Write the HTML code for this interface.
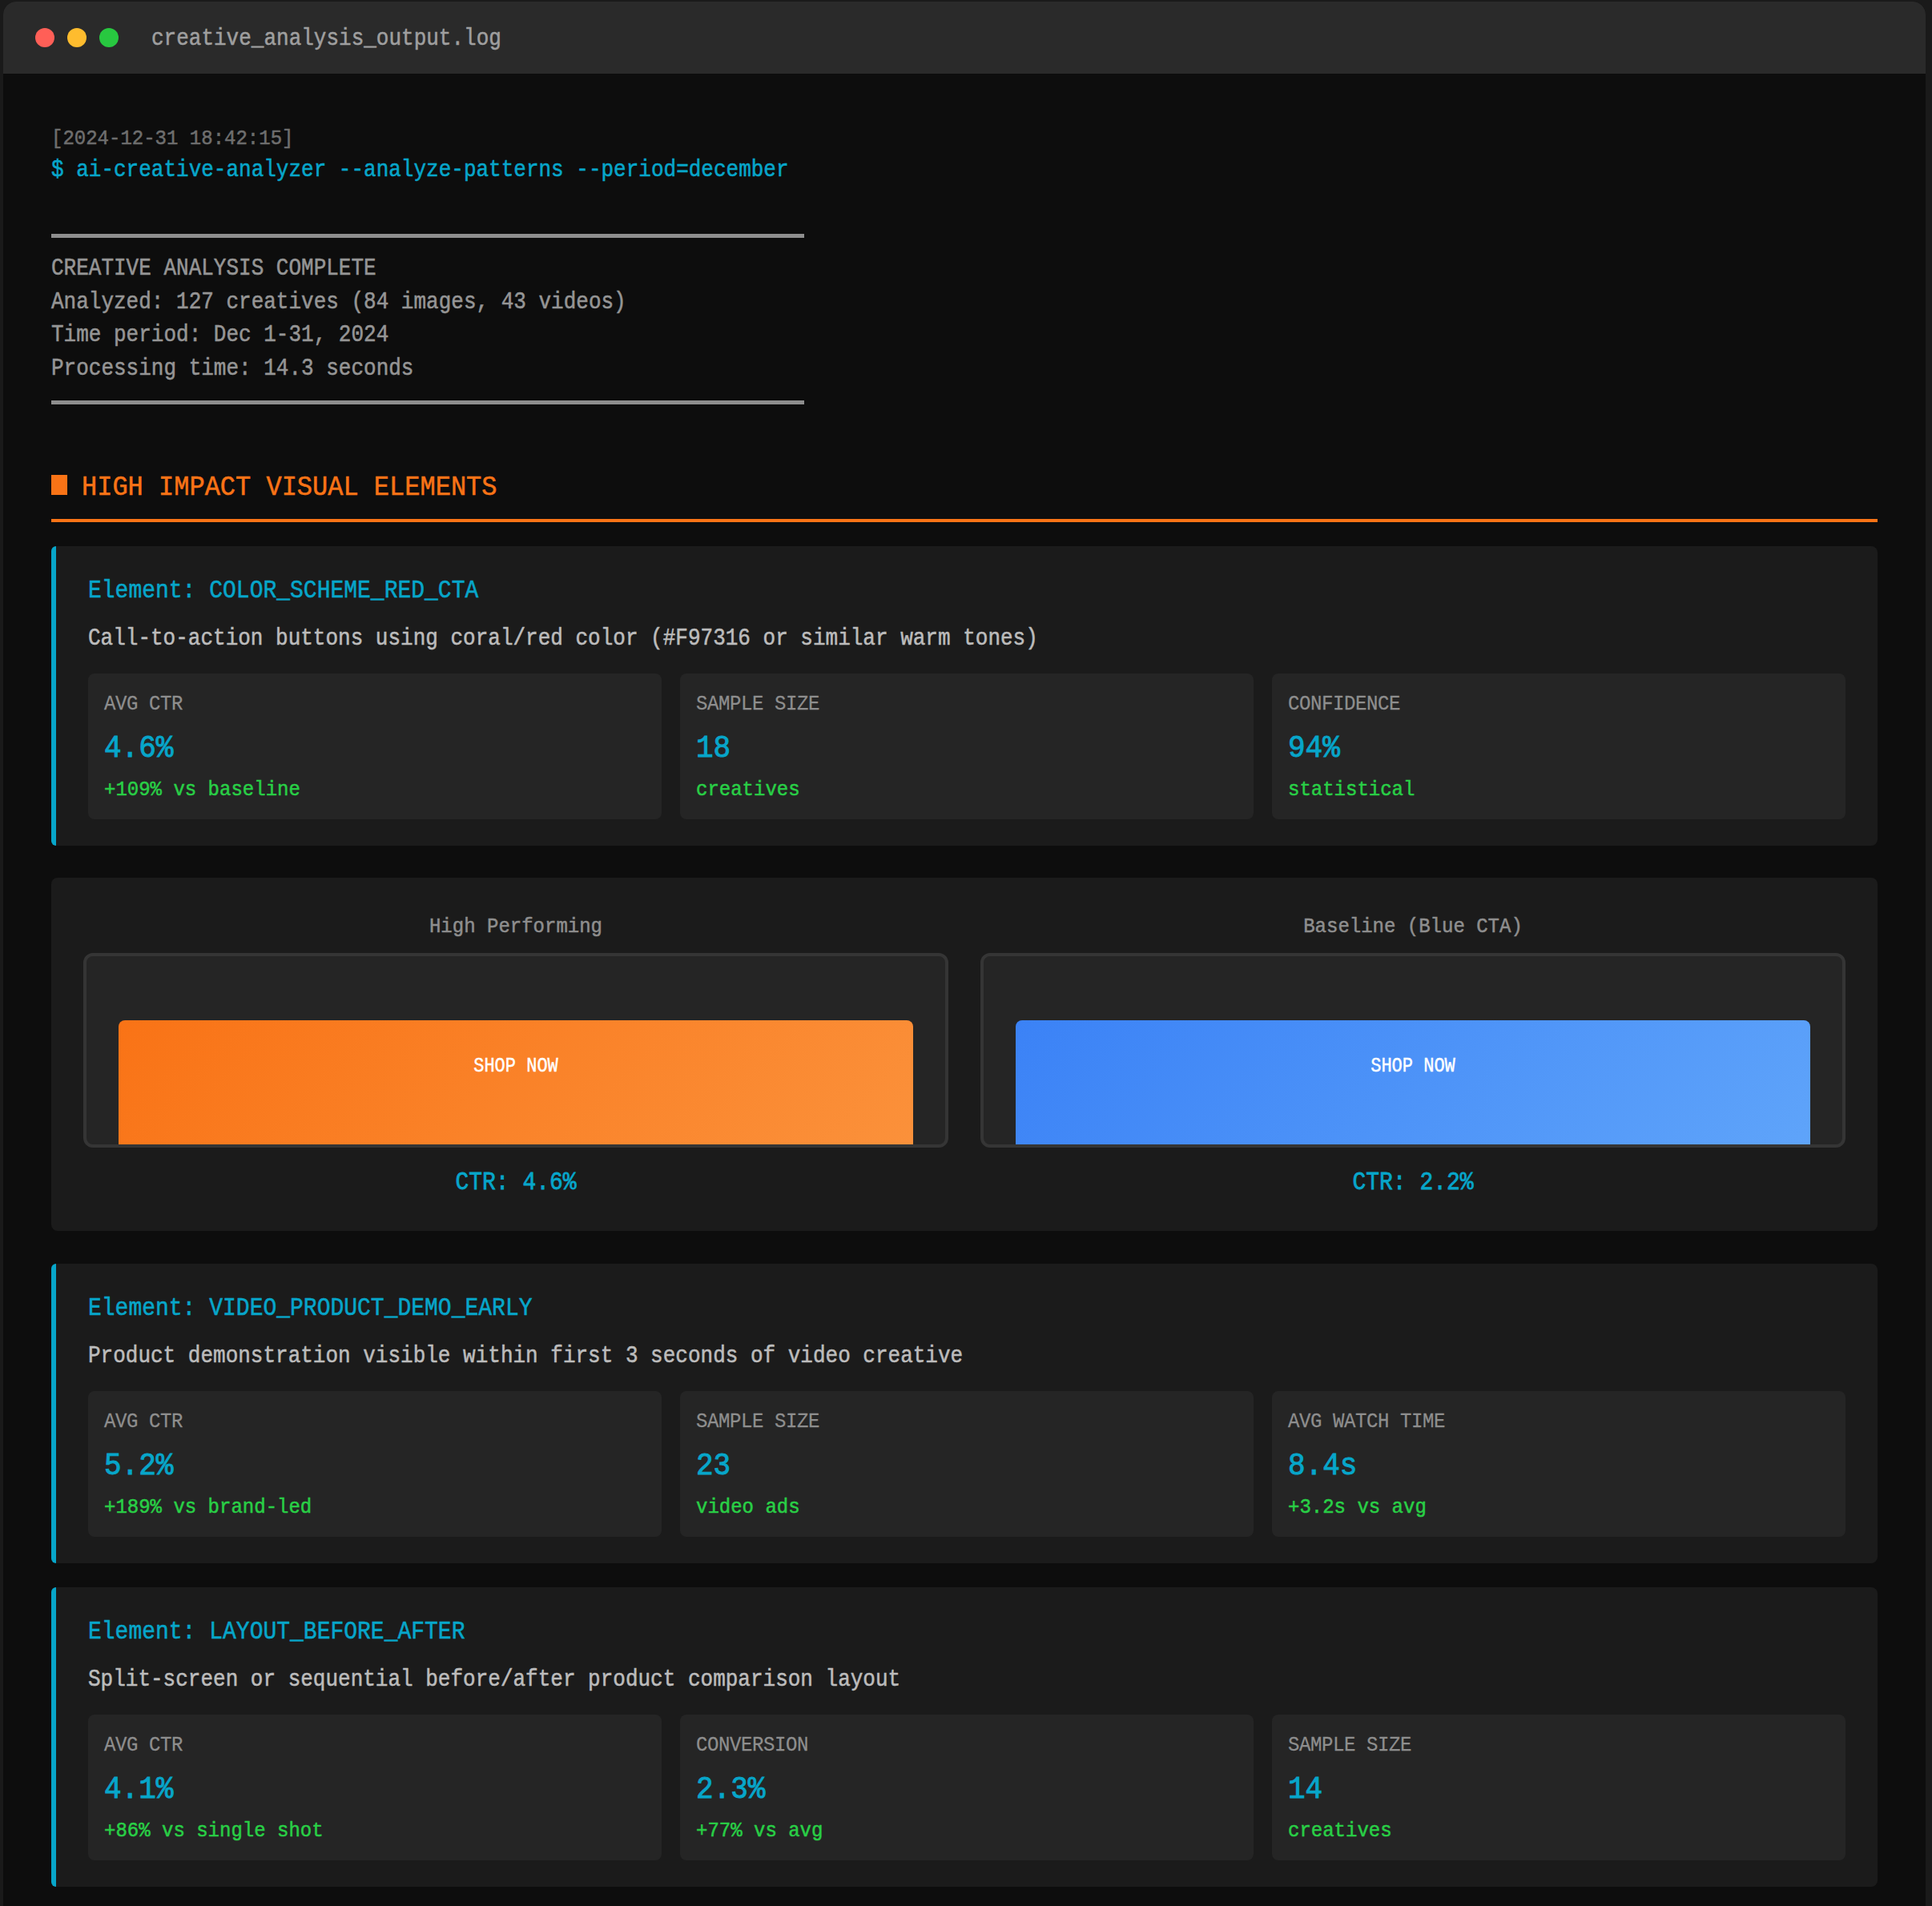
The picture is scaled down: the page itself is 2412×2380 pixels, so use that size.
<!DOCTYPE html>
<html>
<head>
<meta charset="utf-8">
<style>
html,body{margin:0;padding:0;}
body{width:2412px;height:2380px;overflow:hidden;background:#1a1a1a;position:relative;font-family:"Liberation Mono",monospace;}
.win{position:absolute;left:4px;top:2px;width:2400px;height:2500px;border-radius:16px;overflow:hidden;background:#0d0d0d;}
.bar{position:absolute;left:0;top:0;width:2400px;height:90px;background:#2a2a2a;}
.dot{position:absolute;top:33px;width:24px;height:24px;border-radius:50%;}
.t{position:absolute;white-space:pre;line-height:1;transform:scaleY(1.1);transform-origin:0 0.766em;-webkit-text-stroke:0.5px currentColor;}
.v{-webkit-text-stroke:0.9px currentColor;}
.rule{position:absolute;background:#8e8e8e;}
.card{position:absolute;left:64px;width:2280px;background:#1b1b1b;border-radius:8px;}
.card .bl{position:absolute;left:0;top:0;bottom:0;width:6px;background:#07a6ca;border-radius:8px 0 0 8px;}
.box{position:absolute;width:716px;height:182px;background:#252525;border-radius:8px;}
.cyan{color:#07a6ca;}
.green{color:#29cf46;}
.lbl{color:#8e8e8e;letter-spacing:-0.4px;-webkit-text-stroke:0.25px currentColor !important;}
.cmp{position:absolute;left:64px;width:2280px;background:#1b1b1b;border-radius:8px;}
.col{position:absolute;top:0;width:1080px;height:441px;}
.clbl{position:absolute;left:0;width:1080px;top:50px;text-align:center;font-size:24px;line-height:1;color:#8e8e8e;white-space:pre;transform:scaleY(1.1);transform-origin:50% 0.766em;-webkit-text-stroke:0.5px currentColor;}
.pv{position:absolute;left:0;top:94px;width:1072px;height:235px;border:4px solid #353535;border-radius:12px;background:#252525;overflow:hidden;}
.btn{position:absolute;left:40px;top:80px;width:992px;height:200px;border-radius:8px;}
.btn span{position:absolute;left:0;width:992px;top:48px;text-align:center;color:#fff;font-size:22px;line-height:1;white-space:pre;transform:scaleY(1.15);transform-origin:50% 0.766em;-webkit-text-stroke:0.4px currentColor;}
.orange{background:linear-gradient(135deg,#f97316,#fb923c);}
.blue{background:linear-gradient(135deg,#3b82f6,#60a5fa);}
.ctr{position:absolute;left:0;width:1080px;top:368px;text-align:center;font-size:28px;line-height:1;color:#07a6ca;white-space:pre;transform:scaleY(1.12);transform-origin:50% 0.766em;-webkit-text-stroke:0.7px currentColor;}
</style>
</head>
<body>
<div class="win">
  <div class="bar"></div>
  <div class="dot" style="left:40px;background:#ff5f57;"></div>
  <div class="dot" style="left:80px;background:#febc2e;"></div>
  <div class="dot" style="left:120px;background:#28c840;"></div>
</div>

<div class="t" style="left:189px;top:36px;font-size:26px;color:#9f9f9f;">creative_analysis_output.log</div>

<div class="t" style="left:64px;top:162px;font-size:24px;color:#6e6e6e;">[2024-12-31 18:42:15]</div>
<div class="t cyan" style="left:64px;top:200px;font-size:26px;">$ ai-creative-analyzer --analyze-patterns --period=december</div>

<div class="rule" style="left:64px;top:292px;width:940px;height:5px;"></div>
<div class="t" style="left:64px;top:323px;font-size:26px;color:#959595;">CREATIVE ANALYSIS COMPLETE</div>
<div class="t" style="left:64px;top:365px;font-size:26px;color:#959595;">Analyzed: 127 creatives (84 images, 43 videos)</div>
<div class="t" style="left:64px;top:406px;font-size:26px;color:#959595;">Time period: Dec 1-31, 2024</div>
<div class="t" style="left:64px;top:448px;font-size:26px;color:#959595;">Processing time: 14.3 seconds</div>
<div class="rule" style="left:64px;top:500px;width:940px;height:5px;"></div>

<div style="position:absolute;left:64px;top:593px;width:20px;height:25px;background:#f97316;"></div>
<div class="t" style="left:102px;top:594px;font-size:32px;color:#f97316;">HIGH IMPACT VISUAL ELEMENTS</div>
<div style="position:absolute;left:64px;top:648px;width:2280px;height:4px;background:#f97316;"></div>

<!-- CARD 1 -->
<div class="card" style="top:682px;height:374px;">
  <div class="bl"></div>
  <div class="t cyan" style="left:46px;top:43px;font-size:28px;">Element: COLOR_SCHEME_RED_CTA</div>
  <div class="t" style="left:46px;top:103px;font-size:26px;color:#bcbcbc;">Call-to-action buttons using coral/red color (#F97316 or similar warm tones)</div>
  <div class="box" style="left:46px;top:159px;">
    <div class="t lbl" style="left:20px;top:27px;font-size:24px;">AVG CTR</div>
    <div class="t cyan v" style="left:20px;top:77px;font-size:36px;">4.6%</div>
    <div class="t green" style="left:20px;top:134px;font-size:24px;">+109% vs baseline</div>
  </div>
  <div class="box" style="left:785px;top:159px;">
    <div class="t lbl" style="left:20px;top:27px;font-size:24px;">SAMPLE SIZE</div>
    <div class="t cyan v" style="left:20px;top:77px;font-size:36px;">18</div>
    <div class="t green" style="left:20px;top:134px;font-size:24px;">creatives</div>
  </div>
  <div class="box" style="left:1524px;top:159px;">
    <div class="t lbl" style="left:20px;top:27px;font-size:24px;">CONFIDENCE</div>
    <div class="t cyan v" style="left:20px;top:77px;font-size:36px;">94%</div>
    <div class="t green" style="left:20px;top:134px;font-size:24px;">statistical</div>
  </div>
</div>
<!-- COMPARISON -->
<div class="cmp" style="top:1096px;height:441px;">
  <div class="col" style="left:40px;">
    <div class="clbl">High Performing</div>
    <div class="pv"><div class="btn orange"><span>SHOP NOW</span></div></div>
    <div class="ctr">CTR: 4.6%</div>
  </div>
  <div class="col" style="left:1160px;">
    <div class="clbl">Baseline (Blue CTA)</div>
    <div class="pv"><div class="btn blue"><span>SHOP NOW</span></div></div>
    <div class="ctr">CTR: 2.2%</div>
  </div>
</div>
<!-- CARD 2 -->
<div class="card" style="top:1578px;height:374px;">
  <div class="bl"></div>
  <div class="t cyan" style="left:46px;top:43px;font-size:28px;">Element: VIDEO_PRODUCT_DEMO_EARLY</div>
  <div class="t" style="left:46px;top:103px;font-size:26px;color:#bcbcbc;">Product demonstration visible within first 3 seconds of video creative</div>
  <div class="box" style="left:46px;top:159px;">
    <div class="t lbl" style="left:20px;top:27px;font-size:24px;">AVG CTR</div>
    <div class="t cyan v" style="left:20px;top:77px;font-size:36px;">5.2%</div>
    <div class="t green" style="left:20px;top:134px;font-size:24px;">+189% vs brand-led</div>
  </div>
  <div class="box" style="left:785px;top:159px;">
    <div class="t lbl" style="left:20px;top:27px;font-size:24px;">SAMPLE SIZE</div>
    <div class="t cyan v" style="left:20px;top:77px;font-size:36px;">23</div>
    <div class="t green" style="left:20px;top:134px;font-size:24px;">video ads</div>
  </div>
  <div class="box" style="left:1524px;top:159px;">
    <div class="t lbl" style="left:20px;top:27px;font-size:24px;">AVG WATCH TIME</div>
    <div class="t cyan v" style="left:20px;top:77px;font-size:36px;">8.4s</div>
    <div class="t green" style="left:20px;top:134px;font-size:24px;">+3.2s vs avg</div>
  </div>
</div>
<!-- CARD 3 -->
<div class="card" style="top:1982px;height:374px;">
  <div class="bl"></div>
  <div class="t cyan" style="left:46px;top:43px;font-size:28px;">Element: LAYOUT_BEFORE_AFTER</div>
  <div class="t" style="left:46px;top:103px;font-size:26px;color:#bcbcbc;">Split-screen or sequential before/after product comparison layout</div>
  <div class="box" style="left:46px;top:159px;">
    <div class="t lbl" style="left:20px;top:27px;font-size:24px;">AVG CTR</div>
    <div class="t cyan v" style="left:20px;top:77px;font-size:36px;">4.1%</div>
    <div class="t green" style="left:20px;top:134px;font-size:24px;">+86% vs single shot</div>
  </div>
  <div class="box" style="left:785px;top:159px;">
    <div class="t lbl" style="left:20px;top:27px;font-size:24px;">CONVERSION</div>
    <div class="t cyan v" style="left:20px;top:77px;font-size:36px;">2.3%</div>
    <div class="t green" style="left:20px;top:134px;font-size:24px;">+77% vs avg</div>
  </div>
  <div class="box" style="left:1524px;top:159px;">
    <div class="t lbl" style="left:20px;top:27px;font-size:24px;">SAMPLE SIZE</div>
    <div class="t cyan v" style="left:20px;top:77px;font-size:36px;">14</div>
    <div class="t green" style="left:20px;top:134px;font-size:24px;">creatives</div>
  </div>
</div>
</body>
</html>
